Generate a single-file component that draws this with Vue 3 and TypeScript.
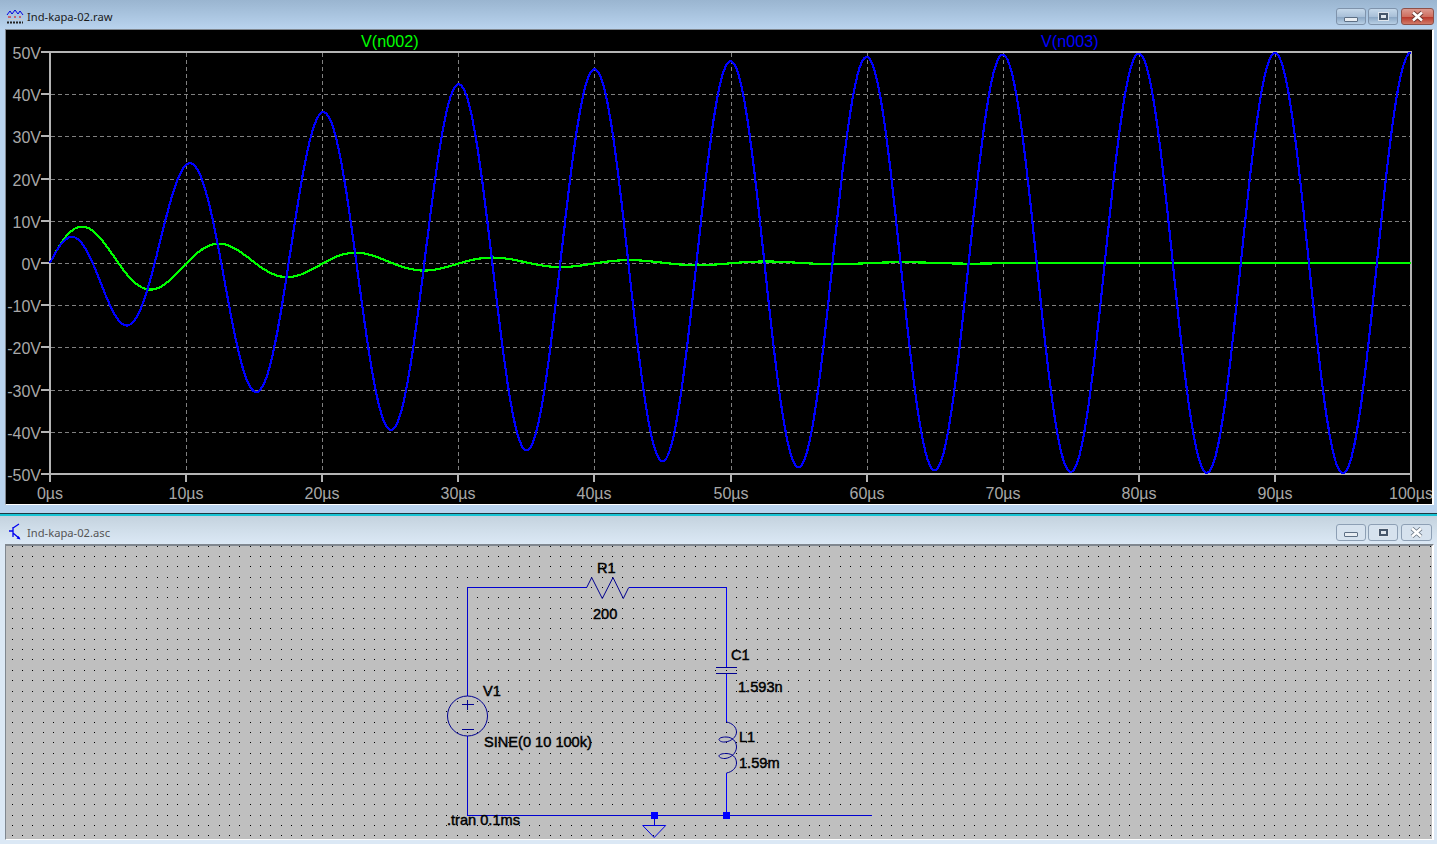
<template>
  <div class="desktop">
    <section class="window active">
      <header class="titlebar">
        <svg class="app-icon" width="18" height="16" viewBox="0 0 18 16">
          <path d="M1 6 L4 2 L6 5 L9 1 L12 5 L14 2 L17 6" fill="none" stroke="#0000e0" stroke-width="1" />
          <path d="M2 8h3M8 8h2M13 8h2" stroke="#e00000" stroke-width="1" />
          <path d="M1 10.5h16" stroke="#c8c8c8" stroke-width="1" />
          <path d="M1 13.5h16" stroke="#222" stroke-width="2" stroke-dasharray="2 1" />
        </svg>
        <span class="title">Ind-kapa-02.raw</span>
        <div class="controls">
          <button class="ctl"><i class="min"></i></button>
          <button class="ctl"><i class="max"></i></button>
          <button class="ctl close">
            <svg width="17" height="13" viewBox="0 0 17 13">
              <path d="M4 2.5L13 10.5M13 2.5L4 10.5" stroke="#6d3a34" stroke-width="4.4" />
              <path d="M4 2.5L13 10.5M13 2.5L4 10.5" stroke="#fff" stroke-width="2.6" />
            </svg>
          </button>
        </div>
      </header>
      <div class="pane plot-pane">
        <svg class="plot" width="1426" height="474" viewBox="6 30 1426 474">
          <g class="grid">
            <path v-for="x in xTicks.slice(1, -1)" :key="'vg' + x.x" :d="`M${x.x} 53V473`" />
            <path v-for="y in yTicks.slice(1, -1)" :key="'hg' + y.y" :d="`M51 ${y.y}H1410`" />
          </g>
          <g class="axis">
            <rect x="50" y="52" width="1361" height="422" fill="none" />
            <path v-for="x in xTicks" :key="'xt' + x.x" :d="`M${x.x} 474V482`" />
            <path v-for="y in yTicks" :key="'yt' + y.y" :d="`M41 ${y.y}H50`" />
          </g>
          <path class="trace green" :d="greenPath" />
          <path class="trace blue" :d="bluePath" />
          <text v-for="y in yTicks" :key="'yl' + y.y" class="lbl" x="41" :y="y.y + 7" text-anchor="end">{{ y.label }}</text>
          <text v-for="x in xTicks" :key="'xl' + x.x" class="lbl" :x="x.x" y="499" text-anchor="middle">{{ x.label }}</text>
          <text class="tname" x="361" y="47" fill="#00ff00">V(n002)</text>
          <text class="tname" x="1041" y="47" fill="#0000ff">V(n003)</text>
        </svg>
      </div>
      <div class="frame-bottom"></div>
    </section>

    <div class="divider"></div>

    <section class="window inactive">
      <header class="titlebar">
        <svg class="app-icon" width="18" height="16" viewBox="0 0 18 16">
          <path d="M3 7H7M7 3V13M7 4L13 0M7 9L13.5 14.5" fill="none" stroke="#0000f0" stroke-width="1.3" />
          <path d="M14.5 15.5l-4-1 2.2-2.6z" fill="#0000f0" />
        </svg>
        <span class="title">Ind-kapa-02.asc</span>
        <div class="controls">
          <button class="ctl"><i class="min"></i></button>
          <button class="ctl"><i class="max"></i></button>
          <button class="ctl close">
            <svg width="17" height="13" viewBox="0 0 17 13">
              <path d="M4 2.5L13 10.5M13 2.5L4 10.5" stroke="#66727f" stroke-width="4.2" />
              <path d="M4 2.5L13 10.5M13 2.5L4 10.5" stroke="#fff" stroke-width="2.6" />
            </svg>
          </button>
        </div>
      </header>
      <div class="pane schem-pane">
        <svg class="schem" width="1426" height="293" viewBox="6 546 1426 293">
          <path class="dots" :d="dotPath" />
          <path class="wire dim" d="M467.5 696V587.5H586.5M628.5 587.5H726.5M467.5 736V815.5H726.5M726.5 815.5H871.5M654.5 815.5V825" />
          <path class="wire" d="M726.5 587.5V667.5M726.5 673.5V722M726.5 773V815.5" />
          <path class="part" d="M586.7 587.5L591.7 577.5L602.3 598.5L613 577.5L623.3 598.5L628.7 587.5" />
          <path class="part" d="M716 667.5H737M716 673.5H737" />
          <path class="part" d="M726.5 722C732 723 736.5 727 736.5 732C736.5 737 731 741.5 725 742C721 742.3 719 740.5 719 739.5C719 738 722 737 726 737C732 737 736.5 741 736.5 747C736.5 753 731 758 725 758.5C721 758.7 719 757 719 756C719 754.5 722 753.5 726 753.5C732 753.5 736.5 757 736.5 763C736.5 768 732 772 726.5 773" />
          <circle class="part" cx="467.5" cy="716" r="20" />
          <path class="part" d="M462 704.5H474M467.5 700V710M462 729.5H474" />
          <path class="gnd" d="M642.7 825.5H665.7L654.2 837.5Z" />
          <rect class="node" x="651" y="812" width="7" height="7" />
          <rect class="node" x="723" y="812" width="7" height="7" />
          <text class="ref" x="597" y="573">R1</text>
          <text class="ref" x="593" y="619">200</text>
          <text class="ref" x="483" y="696">V1</text>
          <text class="ref" x="484" y="747">SINE(0 10 100k)</text>
          <text class="ref" x="447" y="825">.tran 0.1ms</text>
          <text class="ref" x="731" y="660">C1</text>
          <text class="ref" x="738" y="692">1.593n</text>
          <text class="ref" x="739" y="742">L1</text>
          <text class="ref" x="739" y="768">1.59m</text>
        </svg>
      </div>
      <div class="frame-bottom"></div>
    </section>
  </div>
</template>

<script setup lang="ts">
// plot box in page pixels
const X0 = 50, X1 = 1411, Y0 = 52, Y1 = 474

const px = (us: number) => X0 + (us / 100) * (X1 - X0)
const py = (v: number) => Y0 + ((50 - v) / 100) * (Y1 - Y0)

const xTicks = Array.from({ length: 11 }, (_, i) => ({
  x: Math.round(px(i * 10)),
  label: `${i * 10}µs`,
}))
const yTicks = Array.from({ length: 11 }, (_, i) => {
  const v = 50 - i * 10
  return { y: Math.round(py(v)), label: `${v}V` }
})

// series RLC driven by SINE(0 10 100k), integrated with RK4
const R = 200, L = 1.59e-3, C = 1.593e-9
const W = 2 * Math.PI * 1e5
const src = (t: number) => 10 * Math.sin(W * t)

function simulate() {
  const dt = 2e-8
  let t = 0, i = 0, vc = 0
  let green = '', blue = ''
  const di = (tt: number, ii: number, v: number) => (src(tt) - R * ii - v) / L
  const dv = (ii: number) => ii / C
  for (let n = 0; n <= 5000; n++) {
    if (n % 2 === 0) {
      const vg = src(t) - R * i
      const vb = vg - vc
      const cmd = n === 0 ? 'M' : 'L'
      green += `${cmd}${px(t * 1e6).toFixed(1)} ${py(vg).toFixed(1)}`
      blue += `${cmd}${px(t * 1e6).toFixed(1)} ${py(vb).toFixed(1)}`
    }
    const k1i = di(t, i, vc), k1v = dv(i)
    const k2i = di(t + dt / 2, i + (dt * k1i) / 2, vc + (dt * k1v) / 2), k2v = dv(i + (dt * k1i) / 2)
    const k3i = di(t + dt / 2, i + (dt * k2i) / 2, vc + (dt * k2v) / 2), k3v = dv(i + (dt * k2i) / 2)
    const k4i = di(t + dt, i + dt * k3i, vc + dt * k3v), k4v = dv(i + dt * k3i)
    i += (dt / 6) * (k1i + 2 * k2i + 2 * k3i + k4i)
    vc += (dt / 6) * (k1v + 2 * k2v + 2 * k3v + k4v)
    t += dt
  }
  return { green, blue }
}

const { green: greenPath, blue: bluePath } = simulate()

// schematic dot grid, anchored on the wires
const STEP = 10.35
function buildDots() {
  let d = ''
  for (let kx = -44; kx <= 93; kx++) {
    const x = Math.floor(467.5 + kx * STEP)
    if (x < 7 || x > 1431) continue
    for (let ky = -4; ky <= 24; ky++) {
      const y = Math.floor(587.5 + ky * STEP)
      if (y < 546 || y > 838) continue
      d += `M${x} ${y}h1v1h-1z`
    }
  }
  return d
}
const dotPath = buildDots()
</script>

<style>
html, body { margin: 0; background: #dbe8f5; overflow: hidden; }
</style>

<style scoped>
.desktop {
  width: 1437px;
  height: 844px;
  display: flex;
  flex-direction: column;
  font-family: "Liberation Sans", Arial, sans-serif;
  overflow: hidden;
}
.window {
  display: flex;
  flex-direction: column;
  flex: none;
}
.active { background: #b9d3ee; }
.inactive { background: #dbe8f5; }

.titlebar {
  display: flex;
  align-items: center;
  padding: 4px 0 0 6px;
  box-sizing: border-box;
}
.active .titlebar {
  height: 29px;
  background: linear-gradient(180deg, #9ab5d0 0%, #a9c4df 50%, #b9d3ee 100%);
}
.inactive .titlebar {
  height: 28px;
  background: linear-gradient(180deg, #c4d2de 0%, #d0deea 50%, #dbe8f5 100%);
}
.app-icon { flex: none; overflow: visible; }
.title {
  margin-left: 3px;
  font: 11.2px "Noto Sans", "Open Sans", sans-serif;
  color: #1a1a1a;
}
.inactive .title { color: #555; }

.controls {
  margin-left: auto;
  display: flex;
  gap: 2px;
  padding-right: 3px;
}
.ctl {
  width: 30px;
  height: 17px;
  padding: 0;
  border: 1px solid #7f93ab;
  border-radius: 3px;
  display: flex;
  align-items: center;
  justify-content: center;
  background: linear-gradient(180deg, #c5d8ea 0%, #a9c0d8 50%, #8ba7c4 55%, #b9d0e6 100%);
  box-sizing: border-box;
}
.inactive .ctl { background: #d6e2ee; border-color: #8d9fb4; }
.close {
  width: 33px;
  margin-left: 1px;
  background: linear-gradient(180deg, #dc9a90 0%, #cf6f60 50%, #b9392c 55%, #d17a68 100%);
  border-color: #8e5048;
}
.inactive .close { width: 31px; margin-right: 2px; background: #d6e2ee; border-color: #8d9fb4; }
.min {
  display: block;
  width: 12px;
  height: 3px;
  margin-top: 5px;
  background: #e8edf2;
  border: 1px solid #5d6f84;
  box-sizing: content-box;
  border-radius: 1px;
}
.max {
  display: block;
  width: 5px;
  height: 3px;
  background: #dfe6ee;
  border: 2px solid #46566a;
  outline: 1px solid #dfe6ee;
}

.pane {
  margin-left: 5px;
  margin-right: 3px;
  border-top: 1px solid #80878f;
  border-left: 1px solid #80878f;
  border-right: 2px solid #fff;
  border-bottom: 1px solid #fff;
}
.plot-pane { background: #000; }
.schem-pane { background: #bfbfbf; border-top-width: 2px; }
.plot, .schem { display: block; }
.frame-bottom { height: 8px; }
.inactive .frame-bottom { height: 4px; }
.divider {
  height: 3px;
  flex: none;
  background: linear-gradient(180deg, #1f3640 0 1px, #19c3d4 1px 100%);
}

.grid path {
  stroke: #808080;
  stroke-width: 1;
  stroke-dasharray: 4 3;
  fill: none;
  shape-rendering: crispEdges;
}
.axis rect, .axis path {
  stroke: #b4b4b4;
  stroke-width: 2;
  shape-rendering: crispEdges;
}
.trace {
  fill: none;
  stroke-width: 2.2;
  stroke-linejoin: round;
  shape-rendering: crispEdges;
}
.green { stroke: #00ff00; }
.blue { stroke: #0000ff; }
.lbl {
  font-family: "Liberation Sans", Arial, sans-serif;
  font-size: 16px;
  fill: #a8a8a8;
}
.tname {
  font-family: "Liberation Sans", Arial, sans-serif;
  font-size: 16.2px;
}

.dots { fill: #000; shape-rendering: crispEdges; }
.wire {
  fill: none;
  stroke: #0000ff;
  stroke-width: 1;
  shape-rendering: crispEdges;
}
.wire.dim { stroke: #0000d0; }
.part {
  fill: none;
  stroke: #000090;
  stroke-width: 1;
}
.gnd {
  fill: none;
  stroke: #0000e0;
  stroke-width: 1;
}
.node { fill: #0000ff; }
.ref {
  font-family: "Liberation Sans", Arial, sans-serif;
  font-size: 14.6px;
  fill: #000;
  stroke: #000;
  stroke-width: 0.45px;
}
</style>
